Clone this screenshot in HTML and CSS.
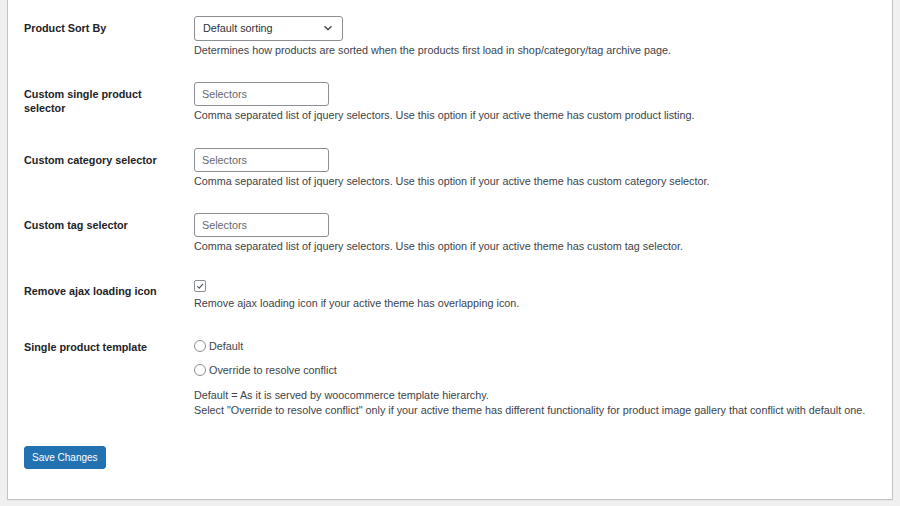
FILE: index.html
```html
<!DOCTYPE html>
<html lang="en">
<head>
<meta charset="utf-8">
<title>Settings</title>
<link rel="stylesheet" href="styles.css">
</head>
<body>
<div class="card">
  <div class="row">
    <div class="th">Product Sort By</div>
    <div class="td">
      <div class="select"><span>Default sorting</span><svg class="chev" width="10" height="6" viewBox="0 0 10 6"><path d="M1.5 1.2 L5 4.6 L8.5 1.2" fill="none" stroke="#50575e" stroke-width="1.6"/></svg></div>
      <p class="desc">Determines how products are sorted when the products first load in shop/category/tag archive page.</p>
    </div>
  </div>
  <div class="row">
    <div class="th">Custom single product selector</div>
    <div class="td">
      <input class="text" type="text" placeholder="Selectors">
      <p class="desc">Comma separated list of jquery selectors. Use this option if your active theme has custom product listing.</p>
    </div>
  </div>
  <div class="row">
    <div class="th">Custom category selector</div>
    <div class="td">
      <input class="text" type="text" placeholder="Selectors">
      <p class="desc">Comma separated list of jquery selectors. Use this option if your active theme has custom category selector.</p>
    </div>
  </div>
  <div class="row">
    <div class="th">Custom tag selector</div>
    <div class="td">
      <input class="text" type="text" placeholder="Selectors">
      <p class="desc">Comma separated list of jquery selectors. Use this option if your active theme has custom tag selector.</p>
    </div>
  </div>
  <div class="row">
    <div class="th">Remove ajax loading icon</div>
    <div class="td">
      <div class="checkline"><span class="checkbox"><svg width="10" height="10" viewBox="0 0 10 10"><path d="M2.2 5.2 L4.2 7.2 L8 2.8" fill="none" stroke="#50575e" stroke-width="1.1"/></svg></span></div>
      <p class="desc">Remove ajax loading icon if your active theme has overlapping icon.</p>
    </div>
  </div>
  <div class="row">
    <div class="th">Single product template</div>
    <div class="td">
      <div class="radioline"><span class="radio"></span>Default</div>
      <div class="radioline"><span class="radio"></span>Override to resolve conflict</div>
      <p class="desc long">Default = As it is served by woocommerce template hierarchy.<br>Select "Override to resolve conflict" only if your active theme has different functionality for product image gallery that conflict with default one.</p>
    </div>
  </div>
  <div class="submit">
    <button class="button" type="button">Save Changes</button>
  </div>
</div>
</body>
</html>
```
FILE: styles.css
```css
html, body {
  margin: 0;
  padding: 0;
}
body {
  background: #f0f0f1;
  font-family: "Liberation Sans", Arial, sans-serif;
  color: #3c434a;
  height: 506px;
  overflow: hidden;
}
.card {
  margin: 0 7px 0 7px;
  background: #fff;
  border: 1px solid #c3c4c7;
  border-top: none;
  box-shadow: 0 1px 1px rgba(0,0,0,0.04);
  padding: 4.5px 16px 0 16px;
  height: 494.5px;
}
.row {
  display: grid;
  grid-template-columns: 170px 1fr;
  padding: 11px 0 13.5px;
}
.th {
  padding-top: 5px;
  font-weight: bold;
  font-size: 10.8px;
  line-height: 14px;
  color: #1d2327;
  padding-right: 24px;
}
.td {
  font-size: 10.8px;
}
.select {
  box-sizing: border-box;
  width: 149px;
  height: 25px;
  border: 1px solid #8c8f94;
  border-radius: 3px;
  display: flex;
  align-items: center;
  justify-content: space-between;
  padding: 0 9px 0 8px;
  font-size: 10.8px;
  color: #2c3338;
}
.chev {
  display: block;
}
.text {
  display: block;
  box-sizing: border-box;
  width: 135px;
  height: 24px;
  margin: 0;
  border: 1px solid #8c8f94;
  border-radius: 3px;
  padding: 0 7px;
  font-family: "Liberation Sans", Arial, sans-serif;
  font-size: 10.8px;
  color: #2c3338;
  background: #fff;
  outline: none;
}
.text::placeholder {
  color: #646970;
  opacity: 1;
}
.desc {
  margin: 2px 0 0;
  line-height: 15px;
  font-size: 10.8px;
  color: #3c434a;
}
.desc.long {
  margin-top: 10px;
}
.checkline {
  height: 15px;
  display: flex;
  align-items: center;
}
.checkbox {
  box-sizing: border-box;
  width: 12px;
  height: 12px;
  border: 1px solid #8c8f94;
  border-radius: 2px;
  display: flex;
  align-items: center;
  justify-content: center;
}
.checkbox svg {
  display: block;
}
.radioline {
  display: flex;
  align-items: center;
  height: 15px;
  line-height: 15px;
  font-size: 10.8px;
  color: #3c434a;
  margin-top: 3.5px;
}
.radioline + .radioline {
  margin-top: 9px;
}
.radio {
  box-sizing: border-box;
  width: 12px;
  height: 12px;
  border: 1px solid #8c8f94;
  border-radius: 50%;
  margin-right: 3px;
}
.submit {
  padding-top: 15px;
}
.button {
  box-sizing: border-box;
  height: 23px;
  padding: 0 7px;
  background: #2271b1;
  border: 1px solid #2271b1;
  border-radius: 3px;
  color: #fff;
  font-family: "Liberation Sans", Arial, sans-serif;
  font-size: 10px;
  line-height: 21px;
  cursor: pointer;
}
```
